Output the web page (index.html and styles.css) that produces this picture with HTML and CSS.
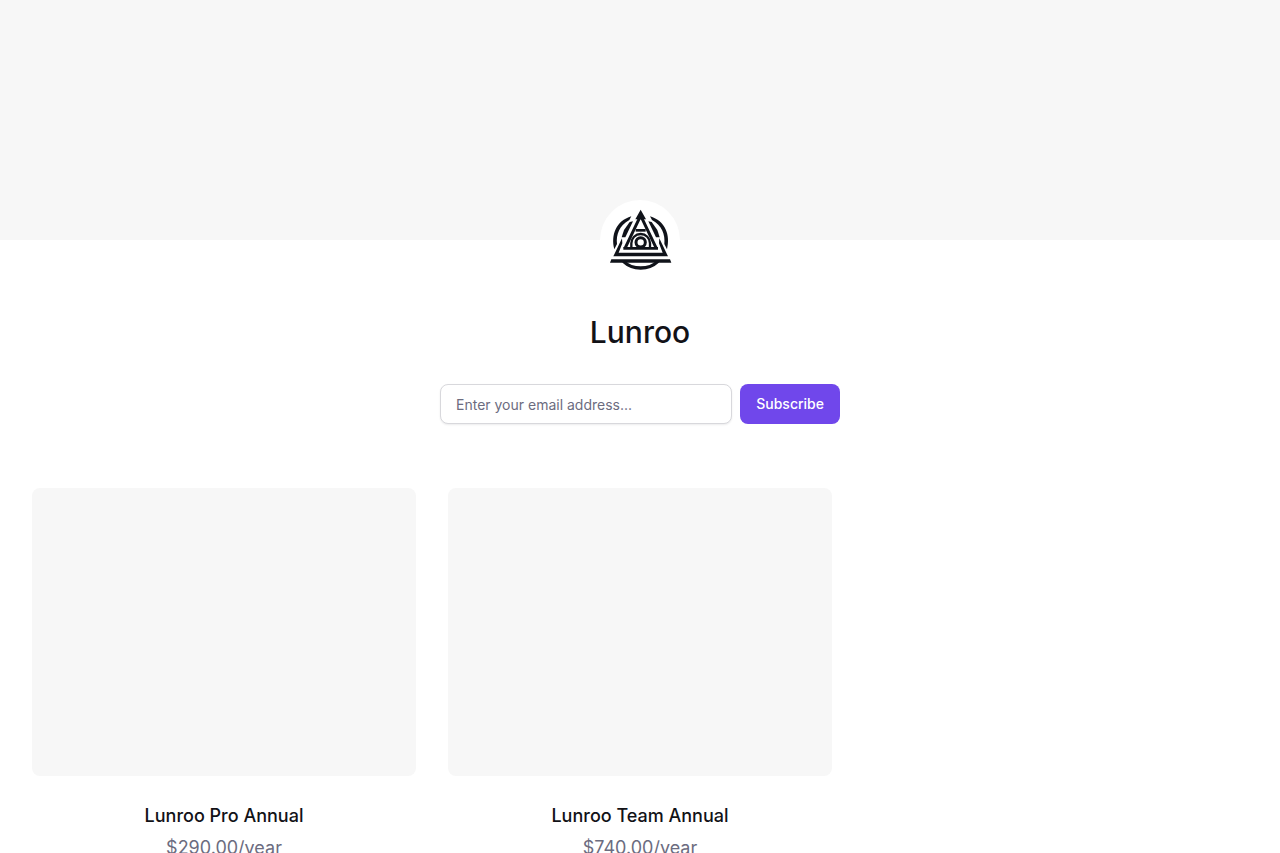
FILE: index.html
```html
<!DOCTYPE html>
<html lang="en">
<head>
<meta charset="utf-8">
<meta name="viewport" content="width=device-width, initial-scale=1">
<title>Lunroo</title>
<link rel="stylesheet" href="styles.css">
</head>
<body>
<div class="banner"></div>
<header class="profile">
  <svg class="logo" viewBox="0 0 240 240" role="img" aria-label="Lunroo logo">
    <circle cx="120" cy="120" r="120" fill="#fff"/>
    <g fill="none" stroke="#10131a" stroke-width="10">
      <path d="M70 184Q91 204 122 204Q153 204 174 184"/>
      <path d="M118 55L75 145M126 55L169 145" stroke-width="9"/>
      <path d="M70 145H174" stroke-width="8"/>
      <path d="M107 91H137" stroke-width="8"/>
      <path d="M94 143V130A28 28 0 0 1 150 130V143" stroke-width="7"/>
      <circle cx="122" cy="127" r="14" fill="#fff" stroke-width="9"/>
    </g>
    <g fill="#10131a">
      <path d="M94 49L88 60C58 76 48 104 51 132L43 148C32 105 48 63 94 49Z"/>
      <path d="M150 49L156 60C186 76 196 104 193 132L201 148C212 105 196 63 150 49Z"/>
      <path d="M99 64L76 112H65L72 90L89 66Z"/>
      <path d="M145 64L168 112H179L172 90L155 66Z"/>
      <path d="M122 29L138 58H106ZM66 115L67 130L56 158H188L177 130L178 115L204 169H40ZM34 178H210L214 188H30Z"/>
    </g>
  </svg>
  <h1 class="name">Lunroo</h1>
  <form class="subscribe">
    <input class="email" type="email" placeholder="Enter your email address..." aria-label="Email address">
    <button class="button" type="button">Subscribe</button>
  </form>
</header>
<main class="products">
  <article class="product">
    <div class="cover"></div>
    <h2 class="title">Lunroo Pro Annual</h2>
    <p class="price">$290.00/year</p>
  </article>
  <article class="product">
    <div class="cover"></div>
    <h2 class="title">Lunroo Team Annual</h2>
    <p class="price">$740.00/year</p>
  </article>
</main>
</body>
</html>
```

FILE: styles.css
```css
* { box-sizing: border-box; }
body {
  margin: 0;
  background: #fff;
  color: #121217;
  font-family: Inter, "Liberation Sans", sans-serif;
}
.banner { height: 240px; background: #f7f7f7; }
.profile {
  display: flex;
  flex-direction: column;
  align-items: center;
  margin-top: -40px;
  padding: 0 32px;
}
.logo { width: 80px; height: 80px; }
.name {
  margin: 32px 0;
  font-size: 30px;
  font-weight: 500;
  line-height: 40px;
}
.subscribe { display: flex; gap: 8px; width: 100%; max-width: 400px; }
.email {
  flex: 1;
  min-width: 0;
  height: 40px;
  padding: 0 15px;
  border: 1px solid #d8d8dc;
  border-radius: 8px;
  background: #fff;
  box-shadow: 0 1px 2px rgba(18, 18, 23, 0.08);
  color: #121217;
  font: 400 14px/20px Inter, "Liberation Sans", sans-serif;
}
.email::placeholder { color: #6c6c7f; opacity: 1; }
.button {
  height: 40px;
  padding: 0 16px;
  border: 0;
  border-radius: 8px;
  background: #7047eb;
  color: #fff;
  font: 500 14px/20px Inter, "Liberation Sans", sans-serif;
}
.products {
  display: grid;
  grid-template-columns: repeat(3, 1fr);
  gap: 32px;
  padding: 64px 32px;
}
.product { text-align: center; }
.cover { height: 288px; border-radius: 8px; background: #f7f7f7; }
.title {
  margin: 26px 0 4px;
  font-size: 18px;
  font-weight: 500;
  line-height: 28px;
}
.price {
  margin: 0;
  color: #6c6c7f;
  font-size: 18px;
  line-height: 28px;
}
```
